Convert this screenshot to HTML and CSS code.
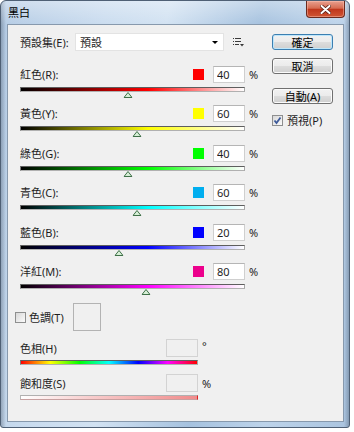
FILE: index.html
```html
<!DOCTYPE html>
<html>
  <head>
    <meta charset="utf-8">
    <title>黑白</title>
    <link rel="stylesheet" href="styles.css">
  </head>
  <body>
    <div class="window">
      <div class="titlebar">
        <span class="title">黑白</span>
        <div class="close">
          <svg width="11" height="9" viewBox="0 0 11 9">
            <path d="M1.5 1 L9.5 8 M9.5 1 L1.5 8" stroke="#5b2016" stroke-width="3.6" stroke-linecap="round" />
            <path d="M1.5 1 L9.5 8 M9.5 1 L1.5 8" stroke="#fff" stroke-width="2" stroke-linecap="round" />
          </svg>
        </div>
      </div>
      <div class="client">
        <div class="main">
          <div class="preset">
            <label>預設集(E):</label>
            <div class="select"><span>預設</span><i class="arrow"></i></div>
            <svg class="menu" width="11" height="9" viewBox="0 0 11 9">
              <path d="M0 0.5 H1 M2 0.5 H8 M0 3.5 H1 M2 3.5 H8 M0 6.5 H1 M2 6.5 H6" stroke="#3a3a3a" stroke-width="1" />
              <path d="M7 6 H11 L9 8.5 Z" fill="#3a3a3a" />
            </svg>
          </div>
          <div class="channels">
            <div class="channel red">
              <div class="head"><label>紅色(R):</label><span class="swatch"></span><input class="field" value="40"><span class="unit">%</span></div>
              <div class="track"><span class="thumb" style="left: 48%"><svg width="9" height="6" viewBox="0 0 9 6"><polygon points="4.5,0.5 8.5,5.5 0.5,5.5" /></svg></span></div>
            </div>
            <div class="channel yellow">
              <div class="head"><label>黃色(Y):</label><span class="swatch"></span><input class="field" value="60"><span class="unit">%</span></div>
              <div class="track"><span class="thumb" style="left: 52%"><svg width="9" height="6" viewBox="0 0 9 6"><polygon points="4.5,0.5 8.5,5.5 0.5,5.5" /></svg></span></div>
            </div>
            <div class="channel green">
              <div class="head"><label>綠色(G):</label><span class="swatch"></span><input class="field" value="40"><span class="unit">%</span></div>
              <div class="track"><span class="thumb" style="left: 48%"><svg width="9" height="6" viewBox="0 0 9 6"><polygon points="4.5,0.5 8.5,5.5 0.5,5.5" /></svg></span></div>
            </div>
            <div class="channel cyan">
              <div class="head"><label>青色(C):</label><span class="swatch"></span><input class="field" value="60"><span class="unit">%</span></div>
              <div class="track"><span class="thumb" style="left: 52%"><svg width="9" height="6" viewBox="0 0 9 6"><polygon points="4.5,0.5 8.5,5.5 0.5,5.5" /></svg></span></div>
            </div>
            <div class="channel blue">
              <div class="head"><label>藍色(B):</label><span class="swatch"></span><input class="field" value="20"><span class="unit">%</span></div>
              <div class="track"><span class="thumb" style="left: 44%"><svg width="9" height="6" viewBox="0 0 9 6"><polygon points="4.5,0.5 8.5,5.5 0.5,5.5" /></svg></span></div>
            </div>
            <div class="channel magenta">
              <div class="head"><label>洋紅(M):</label><span class="swatch"></span><input class="field" value="80"><span class="unit">%</span></div>
              <div class="track"><span class="thumb" style="left: 56%"><svg width="9" height="6" viewBox="0 0 9 6"><polygon points="4.5,0.5 8.5,5.5 0.5,5.5" /></svg></span></div>
            </div>
          </div>
          <div class="tint">
            <span class="checkbox"></span>
            <label class="tint-label">色調(T)</label>
            <span class="tint-color"></span>
          </div>
          <div class="hue">
            <div class="head"><label>色相(H)</label><input class="field off" value=""><span class="unit deg">°</span></div>
            <div class="track"></div>
          </div>
          <div class="sat">
            <div class="head"><label>飽和度(S)</label><input class="field off" value=""><span class="unit">%</span></div>
            <div class="track"></div>
          </div>
        </div>
        <div class="side">
          <button class="btn default">確定</button>
          <button class="btn">取消</button>
          <button class="btn auto">自動(A)</button>
          <label class="preview">
            <span class="checkbox checked">
              <svg width="9" height="9" viewBox="0 0 9 9"><path d="M1.5 4.5 L3.5 7 L7.5 1.5" fill="none" stroke="#3d5a9a" stroke-width="1.8" /></svg>
            </span>
            預視(P)
          </label>
        </div>
      </div>
    </div>
  </body>
</html>
```

FILE: styles.css
```css
* {
  box-sizing: border-box;
}
body {
  margin: 0;
  background: #fff;
  font-family: 'Noto Sans', 'Noto Sans CJK TC', sans-serif;
  font-size: 11px;
  line-height: 13px;
  color: #1e1e1e;
}
.window {
  width: 350px;
  height: 428px;
  padding: 0 5px 5px 6px;
  border: 1px solid #4f6075;
  border-radius: 6px 6px 3px 3px;
  background: linear-gradient(to bottom, rgba(255, 255, 255, 0.35), rgba(255, 255, 255, 0) 24px),
    linear-gradient(to right, rgba(60, 75, 95, 0.35), rgba(60, 75, 95, 0) 5px, rgba(60, 75, 95, 0) 343px, rgba(60, 75, 95, 0.35)),
    linear-gradient(100deg, #b4cbe4 0%, #cadcef 25%, #d2e2f2 40%, #a6c2df 62%, #bdd3ea 80%, #aac4df 100%);
  display: flex;
  flex-direction: column;
}
.titlebar {
  height: 23px;
  display: flex;
  align-items: flex-start;
  justify-content: space-between;
  padding-left: 1px;
}
.title {
  line-height: 23px;
  color: #000;
}
.close {
  width: 39px;
  height: 17px;
  margin-right: -1px;
  border: 1px solid #6b2a1e;
  border-top: 0;
  border-radius: 0 0 4px 4px;
  background: linear-gradient(#e8a08f, #d66c52 45%, #c0371c 52%, #cf5533 100%);
  box-shadow: inset 0 0 0 1px rgba(255, 200, 185, 0.45);
  display: flex;
  align-items: center;
  justify-content: center;
}
.client {
  flex: 1;
  background: #f0f0f0;
  border: 1px solid #8799ad;
  display: flex;
}
.main {
  width: 264px;
  padding: 8px 0 0 12px;
}
.side {
  width: 61px;
  padding-top: 9px;
  display: flex;
  flex-direction: column;
}

/* preset row */
.preset {
  display: flex;
  align-items: center;
  height: 18px;
}
.preset label {
  width: 55px;
}
.select {
  width: 149px;
  height: 18px;
  background: #fff;
  border: 1px solid #e3e3e3;
  display: flex;
  align-items: center;
  justify-content: space-between;
  padding: 0 5px 0 4px;
}
.arrow {
  border-left: 3px solid transparent;
  border-right: 3px solid transparent;
  border-top: 3px solid #000;
}
.menu {
  margin-left: 9px;
}

/* channel sliders */
.channels {
  margin-top: 15px;
}
.channel {
  height: 39.4px;
}
.head {
  display: flex;
  align-items: center;
  height: 17px;
  width: 242px;
}
.head label {
  flex: 1;
}
.swatch {
  width: 11px;
  height: 11px;
  margin-right: 9px;
}
.field {
  width: 32px;
  height: 17px;
  border: 1px solid #cfcfcf;
  border-top-color: #b5b5b5;
  background: #fff;
  font: inherit;
  color: #1e1e1e;
  padding: 0 3px;
  outline: none;
}
.field.off {
  height: 18px;
  background: #f0f0f0;
  border-color: #d3d3d3;
}
.unit {
  margin-left: 4px;
  width: 13px;
}
.unit.deg {
  align-self: flex-start;
}
.track {
  position: relative;
  width: 225px;
  height: 5px;
  margin-top: 4px;
  border: 1px solid;
  border-color: #5e5e5e #a6a6a6 #b0b0b0 #7a7a7a;
}
.thumb {
  position: absolute;
  top: 4px;
  width: 9px;
  height: 6px;
  transform: translateX(-50%);
}
.thumb svg {
  display: block;
}
.thumb polygon {
  fill: #d6efd6;
  stroke: #3f7048;
  stroke-width: 1;
}
.red .swatch { background: #ff0000; }
.yellow .swatch { background: #ffff00; }
.green .swatch { background: #00ff00; }
.cyan .swatch { background: #00aeef; }
.blue .swatch { background: #0000ff; }
.magenta .swatch { background: #ec008c; }
.red .track { background: linear-gradient(to right, #000, #ff0000 57%, #fff); }
.yellow .track { background: linear-gradient(to right, #000, #ffff00 57%, #fff); }
.green .track { background: linear-gradient(to right, #000, #00ff00 57%, #fff); }
.cyan .track { background: linear-gradient(to right, #000, #00ffff 57%, #fff); }
.blue .track { background: linear-gradient(to right, #000, #0000ff 57%, #fff); }
.magenta .track { background: linear-gradient(to right, #000, #ff00ff 57%, #fff); }

/* tint */
.tint {
  display: flex;
  align-items: center;
  height: 28px;
  margin: 1px 0 0 -5px;
}
.checkbox {
  width: 11px;
  height: 11px;
  border: 1px solid #8e8f8f;
  background: linear-gradient(135deg, #d8d8d8, #fbfbfb);
  margin-right: 3px;
  display: flex;
  align-items: center;
  justify-content: center;
}
.tint-label {
  width: 44px;
}
.tint-color {
  width: 28px;
  height: 28px;
  border: 1px solid #b3b3b3;
}
.hue {
  margin-top: 8px;
}
.sat {
  margin-top: 9px;
}
.hue .head,
.sat .head {
  width: 195px;
  height: 18px;
}
.hue .track,
.sat .track {
  width: 178px;
  margin-top: 3px;
}
.hue .track {
  background: linear-gradient(to right, #f00, #ff0, #0f0, #0ff, #00f, #f0f, #f00);
}
.sat .track {
  border-color: #b0b0b0 #d22 #c8a0a0 #b8b8b8;
  background: linear-gradient(to right, #fff, #f8cccc 40%, #f08c8c);
}

/* buttons */
.btn {
  width: 61px;
  height: 16px;
  padding: 0;
  font: inherit;
  color: #000;
  border: 1px solid #707070;
  border-radius: 3px;
  background: linear-gradient(#f2f2f2 0%, #ebebeb 50%, #dddddd 50%, #cfcfcf 100%);
  box-shadow: inset 0 0 0 1px #fbfbfb;
}
.btn + .btn {
  margin-top: 8px;
}
.btn.auto {
  margin-top: 14px;
}
.btn.default {
  border-color: #3c7fb1;
  box-shadow: inset 0 0 0 1px #bde6fb;
}
.preview {
  margin-top: 10px;
  display: flex;
  align-items: center;
  height: 13px;
}
.preview .checkbox {
  margin-right: 4px;
}
```
